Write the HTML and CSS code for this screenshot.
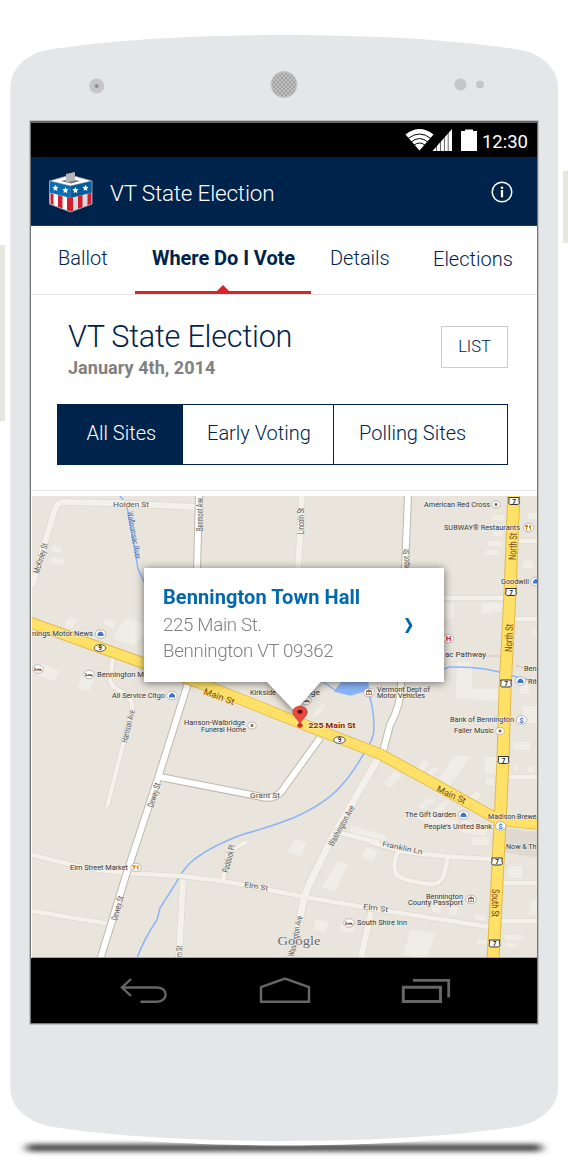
FILE: index.html
```html
<!DOCTYPE html>
<html lang="en">
<head>
<meta charset="utf-8">
<title>VT State Election</title>
<link rel="stylesheet" href="styles.css">
</head>
<body>
<div class="phone">
  <svg class="phone-shell" viewBox="0 0 568 1176" width="568" height="1176" aria-hidden="true">
    <defs>
      <filter id="soft" x="-5%" y="-150%" width="110%" height="400%"><feGaussianBlur stdDeviation="5 2.4"/></filter>
      <pattern id="mesh" width="4" height="4.4" patternUnits="userSpaceOnUse" x="282" y="82.3">
        <circle cx="2" cy="2.2" r="1.2" fill="#999"/><circle cx="0" cy="0" r="1.2" fill="#999"/><circle cx="4" cy="0" r="1.2" fill="#999"/><circle cx="0" cy="4.4" r="1.2" fill="#999"/><circle cx="4" cy="4.4" r="1.2" fill="#999"/>
      </pattern>
    </defs>
    <rect x="26" y="1144" width="516" height="7.500" rx="3.700" fill="#4a4a4a" filter="url(#soft)"/>
    <path d="M10 1080V1093C10 1113 28 1127 51 1131C115 1141 205 1145.500 284 1145.500S453 1141 517 1131C540 1127 558 1113 558 1093V1080Z" fill="#fff"/>
    <path class="shell-side" d="M0 245h5v176H0zM563 171h5v72h-5z"/>
    <path class="shell-body" d="M10.300 88C10.300 69 26 54 47 50C115 39 205 35 284 35S453 39 521 50C542 54 558 69 558 88V1088C558 1108 540 1122 517 1126.500C453 1137 363 1141 284 1141S115 1137 51 1126.500C28 1122 10.300 1108 10.300 1088Z"/>
    <circle cx="96.700" cy="86" r="7.600" fill="#c6c6c6"/><circle cx="96.700" cy="86" r="2" fill="#8f8f8f"/>
    <circle cx="284" cy="84.500" r="13.500" fill="#c6c6c6"/><circle cx="284" cy="84.500" r="12.300" fill="url(#mesh)"/>
    <circle cx="460.500" cy="84.500" r="6.100" fill="#c6c6c6"/><circle cx="480" cy="84.500" r="4" fill="#c6c6c6"/>
  </svg>

  <main class="screen">
    <div class="status">
      <svg class="status-icons" viewBox="405 128 74 24" width="74" height="24" aria-hidden="true">
        <path d="M405.500 134.500Q419.500 123.500 433.500 134.500L419.500 150.500Z" fill="#fff"/>
        <g fill="none" stroke="#000" stroke-width="1"><path d="M408 138.500Q419.500 129.500 431 138.500M410.500 142.500Q419.500 134.500 428.500 142.500M413.500 145.500Q419.500 140.500 425.500 145.500"/></g>
        <path d="M452 129V151H432.500Z" fill="#fff"/>
        <path d="M436.500 140v11M440.500 138v13M444.400 132v19M448.200 129v22" stroke="#000" stroke-width=".6"/>
        <path d="M461 131h4v-1.500h8v1.500h4v20h-16z" fill="#fff"/>
      </svg>
      <span class="clock">12:30</span>
    </div>

    <header class="appbar">
      <svg class="logo" viewBox="48 172 46 42" width="46" height="42" aria-hidden="true">
        <path d="M49.500 182L70.500 176L92 182L70.500 187Z" fill="#fff" stroke="#9aa3ad" stroke-width=".8"/>
        <path d="M61 182L70 180L80 182L71 184.500Z" fill="#777"/>
        <path d="M66 175L75 173V181.500L66 183.500Z" fill="#b5b7ba"/>
        <path d="M49.500 182L70.500 187V213L49.500 205Z" fill="#fff"/>
        <path d="M70.500 187L92 182V205L70.500 213Z" fill="#d8dce0"/>
        <path d="M49.500 182L70.500 187V199L49.500 193.500Z" fill="#0b6db4"/>
        <path d="M70.500 187L92 182V193.500L70.500 199Z" fill="#075c9c"/>
        <path d="M50.500 194L53.500 195V206L50.500 205ZM58 196L62.500 197V209.500L58 208ZM67 198L70.500 199V212.500L67 211.300ZM70.500 199L73 198.300V212L70.500 213ZM78 197L82.500 196V208.500L78 210ZM87.500 194.800L91.500 193.800V205L87.500 206.500Z" fill="#d21f2b"/>
        <g fill="#fff"><path id="star" d="M55.500 185.700l.9 2 2.100.4-1.600 1.500.4 2.300-1.900-1.200-1.900 1.100.5-2.200-1.600-1.600 2.200-.2z"/><use href="#star" x="10" y="2.300"/><use href="#star" x="20" y="2.300"/><use href="#star" x="30" y="0"/></g>
        <path d="M49.500 182V205L70.500 213L92 205V182" fill="none" stroke="#9aa3ad" stroke-width=".9"/>
      </svg>
      <span class="app-title">VT State Election</span>
      <svg class="info" viewBox="0 0 22 22" width="22" height="22" aria-hidden="true"><circle cx="11" cy="11" r="9.800" fill="none" stroke="#fff" stroke-width="1.500"/><circle cx="11" cy="6.700" r="1.300" fill="#fff"/><path d="M11 9v7.300" stroke="#fff" stroke-width="2.200"/></svg>
    </header>

    <nav class="tabs">
      <span class="tab tab-ballot">Ballot</span>
      <span class="tab tab-active">Where Do I Vote</span>
      <span class="tab tab-details">Details</span>
      <span class="tab tab-elections">Elections</span>
    </nav>

    <section class="intro">
      <div class="intro-head">
        <div>
          <h1 class="heading">VT State Election</h1>
          <p class="date">January 4th, 2014</p>
        </div>
        <span class="list-btn">LIST</span>
      </div>
      <div class="segments">
        <span class="seg seg-on">All Sites</span>
        <span class="seg seg-early">Early Voting</span>
        <span class="seg seg-polling">Polling Sites</span>
      </div>
    </section>

    <section class="map-wrap">
      <svg class="map" viewBox="32 496 505 462" width="505" height="462">
        <defs>
          <g id="seven"><path d="M-5.300-3.500H5.300L4.800-1Q6.500 3.500 3 3.500H-3Q-6.500 3.500-4.800-1Z" fill="#fff" stroke="#333" stroke-width="1"/><text class="shield" x="0" y="2.500">7</text></g>
          <g id="nine"><ellipse rx="5.800" ry="3.400" fill="#fff" stroke="#333" stroke-width=".8"/><text class="shield" x="0" y="2.300">9</text></g>
          <g id="halo"><ellipse rx="5.300" ry="4.300" fill="#fff" stroke="#aaa" stroke-width=".8"/></g>
          <g id="dot"><ellipse rx="4.200" ry="3.400" fill="#fff" stroke="#999" stroke-width=".6"/><rect x="-1.300" y="-1.300" width="2.600" height="2.600" fill="#8c5a3c"/></g>
          <g id="food"><use href="#halo"/><path d="M-2-2.500v5M-3-2.500v2h2v-2M2-2.500v5M1-2v2h1" fill="none" stroke="#f57c00" stroke-width="1"/></g>
          <g id="bed"><use href="#halo"/><path d="M-3-1.500v3.500M-3 1h6v1M-1 .3h4" fill="none" stroke="#8c5a3c" stroke-width="1.200"/></g>
          <g id="shop"><use href="#halo"/><path d="M-3 2V0Q-2-2.500 0-2.500T3 0V2Z" fill="#3f74d1"/></g>
          <g id="bank"><use href="#halo"/><text class="dollar" x="0" y="2.900">$</text></g>
          <g id="civic"><use href="#halo"/><path d="M-3-1L0-2.700L3-1ZM-2.500-.5v2.500M0-.5v2.500M2.500-.5v2.500M-3 2h6" fill="#8c5a3c" stroke="#8c5a3c" stroke-width=".7"/></g>
        </defs>
        <rect x="32" y="496" width="506" height="462" fill="#e9e5dd"/>
        <path d="M504 828L537 832V858L503 852Z" fill="#dfd9d1"/>
        <g class="block">
          <path d="M52 545l10 3-1 5-10-2zM51 557l13 2-1 6-13-2zM70 617l7 3-5 9-8-3zM107 618l8 4-1 3 0 4-12-6zM127 617l19 8v8l-13 13-21-8zM40 663l19 8-5 10-22-8zM83 672l12 3-6 16-11-3z"/>
          <path d="M492 515h12v5h-12zM493 531h10v5h-10zM488 541h14v5h-14zM486 550h13v5h-13zM528 513h9v6h-9zM523 561h10v7h-10zM444 603h10l-1 15h-9zM482 603h23v9h-9l-1-4-2 5h-12zM457 662h15v27h27v12l-43-3zM521 678h8v16h-9zM532 630h6v5h-6zM523 706h14v17h-14z"/>
          <path d="M454 756l16 0-21 31-9-3-1-6zM424 760l6 3-8 8-5-3zM434 767l5 2-7 6-5-2zM394 771l8 5-12 12-6-5zM485 757h12v17h-12zM486 778h8v7h-8zM520 742h10v8h-10l-7-1v-6zM527 767h7v5h-7zM515 766h3v4h-3zM477 792l5 3-6 5-6-3zM429 798l6 3-12 8-6-3zM445 800l5 2-11 13-6-3zM419 812l40 9-9 9-35-12zM462 820l27 6-4 10-24-4zM472 837h17v8h-18zM351 825l35 11v7l-37-9zM296 839l11 4-6 13-14-4zM366 847l12 4-5 10-11-3zM338 861l10 3-13 28-13-5z"/>
          <path d="M508 866h14v12h-14zM531 900h6v15h-8zM316 919l13 3-4 10-12-3zM342 922l13 3-2 8-13-2zM411 929l24 5-8 24-24-3zM477 939l11 1v4h-11zM505 935h18v5h-18zM506 943h11v4h-11zM432 898l10 4-2 12-8-3zM450 905l8 2-2 9-7-3zM475 914l11 2-1 5-10-2z"/>
          <path d="M370 831l16 4v6l-16-3zM318 707l8-5-5 11-9 6z"/>
        </g>
        <g class="water">
          <path d="M119 495Q126 502 128 512L135 550L138 569L145 584M322 681L335 690M367 690Q374 705 374 728Q374 740 363 755Q352 774 341 786Q325 804 293 818Q270 827 244 834Q208 847 190 863Q180 874 176 883L160 908L157 920Q145 937 137 958M444 669L450 667Q485 666 513 676L538 682"/>
          <path d="M335 691L343 681H368V690L350 695Z" fill="#8ab4f8"/>
        </g>
        <g class="edge">
          <path class="w6" d="M32 586L54 512Q57 502 63 502L113 503L197 507"/>
          <path class="w6" d="M302 495L298 570M183 880L179 958M371 912L361 958"/>
          <path class="w5" d="M113 657L110 678Q110 686 118 690Q134 697 132 710L107 807M32 855L73 865Q100 871 127 873L180 876L223 881L305 897L380 910L490 927M32 911L110 924M223 880L228 855Q229 850 247 842M340 833L380 843M370 842L400 851Q440 857 495 859M398 851Q392 866 396 874Q403 882 433 884Q443 883 445 870L448 856"/>
          <path class="w5" d="M518 541H538M515 619H538M444 598H506M508 777H538M503 883H538M502 921H538"/>
          <path class="w7" d="M380 755L331 840L308 887Q302 903 300 920L291 958"/>
        </g>
        <g class="minor">
          <path class="w6" d="M32 586L54 512Q57 502 63 502L113 503L197 507"/>
          <path class="w6" d="M302 495L298 570M183 880L179 958M371 912L361 958"/>
          <path class="w5" d="M113 657L110 678Q110 686 118 690Q134 697 132 710L107 807M32 855L73 865Q100 871 127 873L180 876L223 881L305 897L380 910L490 927M32 911L110 924M223 880L228 855Q229 850 247 842M340 833L380 843M370 842L400 851Q440 857 495 859M398 851Q392 866 396 874Q403 882 433 884Q443 883 445 870L448 856"/>
          <path class="w5" d="M518 541H538M515 619H538M444 598H506M508 777H538M503 883H538M502 921H538"/>
          <path class="w7" d="M380 755L331 840L308 887Q302 903 300 920L291 958"/>
        </g>
        <path d="M486 656H500M516 665L524 668" stroke="#d0c9bb" stroke-width="1.200"/>
        <g class="major-edge"><path d="M199 495L197 570M408 495L405 570L401 682Q402 703 390 725L382 755M188 683L158 778L127 872L100 960M160 777L257 796Q273 801 281 792L320 738"/></g>
        <g class="major"><path d="M199 495L197 570M408 495L405 570L401 682Q402 703 390 725L382 755M188 683L158 778L127 872L100 960M160 777L257 796Q273 801 281 792L320 738"/></g>
        <g class="hwy-edge"><path class="main" d="M26 621L143 663L200 683L305 725L380 754L440 787L490 815Q500 822 540 824"/><path class="north" d="M514 490L510 593L505 690L503 760L500 823L493 962"/></g>
        <g class="hwy"><path class="main" d="M26 621L143 663L200 683L305 725L380 754L440 787L490 815Q500 822 540 824"/><path class="north" d="M514 490L510 593L505 690L503 760L500 823L493 962"/></g>

        <g class="street">
          <text x="113" y="507" textLength="36" lengthAdjust="spacingAndGlyphs">Holden St</text>
          <text class="tall" transform="translate(39 574) rotate(-73)" textLength="31" lengthAdjust="spacingAndGlyphs">McKinley St</text>
          <text class="tall" transform="translate(203 531) rotate(-90)" textLength="33" lengthAdjust="spacingAndGlyphs">Benmont Ave</text>
          <text class="tall" transform="translate(304 534) rotate(-90)" textLength="26" lengthAdjust="spacingAndGlyphs">Lincoln St</text>
          <text class="tall" transform="translate(409 568) rotate(-89)" textLength="19" lengthAdjust="spacingAndGlyphs">epot St</text>
          <text class="tall" transform="translate(127 743) rotate(-76)" textLength="33" lengthAdjust="spacingAndGlyphs">Harrison Ave</text>
          <text class="tall" transform="translate(153 808) rotate(-72)" textLength="25" lengthAdjust="spacingAndGlyphs">Dewey St</text>
          <text class="tall" transform="translate(117 921) rotate(-74)" textLength="25" lengthAdjust="spacingAndGlyphs">Dewey St</text>
          <text transform="translate(250 798) rotate(0)" textLength="30" lengthAdjust="spacingAndGlyphs">Grant St</text>
          <text class="tall" transform="translate(333 847) rotate(-61)" textLength="45" lengthAdjust="spacingAndGlyphs">Washington Ave</text>
          <text class="tall" transform="translate(294 957) rotate(-78)" textLength="41" lengthAdjust="spacingAndGlyphs">Washington Ave</text>
          <text class="tall" transform="translate(228 873) rotate(-75)" textLength="28" lengthAdjust="spacingAndGlyphs">Paddock Pl</text>
          <text transform="translate(244 887) rotate(9)" textLength="24" lengthAdjust="spacingAndGlyphs">Elm St</text>
          <text transform="translate(363 909) rotate(7)" textLength="25" lengthAdjust="spacingAndGlyphs">Elm St</text>
          <text transform="translate(382 846) rotate(12)" textLength="41" lengthAdjust="spacingAndGlyphs">Franklin Ln</text>
          <text class="tall" transform="translate(182 957) rotate(-88)" textLength="11" lengthAdjust="spacingAndGlyphs">m St</text>
        </g>
        <text class="river" transform="translate(127 512) rotate(80)" textLength="48" lengthAdjust="spacingAndGlyphs">Walloomsac River</text>
        <g class="hwy-name">
          <text transform="translate(203 694) rotate(20)" textLength="32" lengthAdjust="spacingAndGlyphs">Main St</text>
          <text transform="translate(436 791) rotate(25)" textLength="31" lengthAdjust="spacingAndGlyphs">Main St</text>
          <text class="upright" transform="translate(516 560) rotate(-88)" textLength="27" lengthAdjust="spacingAndGlyphs">North St</text>
          <text class="upright" transform="translate(512 652) rotate(-88)" textLength="28" lengthAdjust="spacingAndGlyphs">North St</text>
          <text class="upright" transform="translate(492 889) rotate(91)" textLength="28" lengthAdjust="spacingAndGlyphs">South St</text>
        </g>
        <g class="poi">
          <text x="32" y="636" textLength="61" lengthAdjust="spacingAndGlyphs">nings Motor News</text>
          <text x="97" y="677" textLength="47" lengthAdjust="spacingAndGlyphs">Bennington M</text>
          <text x="112" y="698" textLength="53" lengthAdjust="spacingAndGlyphs">All Service Citgo</text>
          <text x="184" y="725" textLength="61" lengthAdjust="spacingAndGlyphs">Hanson-Walbridge</text>
          <text x="201" y="731.500" textLength="45" lengthAdjust="spacingAndGlyphs">Funeral Home</text>
          <text x="250" y="695" textLength="26" lengthAdjust="spacingAndGlyphs">Kirkside</text>
          <text x="306" y="695" textLength="14" lengthAdjust="spacingAndGlyphs">dge</text>
          <text x="424" y="507" textLength="66" lengthAdjust="spacingAndGlyphs">American Red Cross</text>
          <text x="444" y="530" textLength="76" lengthAdjust="spacingAndGlyphs">SUBWAY® Restaurants</text>
          <text x="501" y="584" textLength="28" lengthAdjust="spacingAndGlyphs">Goodwill</text>
          <text x="445" y="657" textLength="41" lengthAdjust="spacingAndGlyphs">ac Pathway</text>
          <text x="524" y="671" textLength="12.500" lengthAdjust="spacingAndGlyphs">Ben</text>
          <text x="528" y="684" textLength="8.500" lengthAdjust="spacingAndGlyphs">Rit</text>
          <text x="377" y="692" textLength="53" lengthAdjust="spacingAndGlyphs">Vermont Dept of</text>
          <text x="377" y="698" textLength="48" lengthAdjust="spacingAndGlyphs">Motor Vehicles</text>
          <text x="450" y="722" textLength="64" lengthAdjust="spacingAndGlyphs">Bank of Bennington</text>
          <text x="454" y="733" textLength="40" lengthAdjust="spacingAndGlyphs">Faller Music</text>
          <text x="405" y="817" textLength="51" lengthAdjust="spacingAndGlyphs">The Gift Garden</text>
          <text x="424" y="829" textLength="68" lengthAdjust="spacingAndGlyphs">People's United Bank</text>
          <text x="488" y="819" textLength="48.500" lengthAdjust="spacingAndGlyphs">Madison Brewe</text>
          <text x="506" y="849" textLength="30.500" lengthAdjust="spacingAndGlyphs">Now &amp; Th</text>
          <text x="426" y="899" textLength="37" lengthAdjust="spacingAndGlyphs">Bennington</text>
          <text x="408" y="905" textLength="55" lengthAdjust="spacingAndGlyphs">County Passport</text>
          <text x="357" y="925" textLength="50" lengthAdjust="spacingAndGlyphs">South Shire Inn</text>
          <text x="70" y="870" textLength="58" lengthAdjust="spacingAndGlyphs">Elm Street Market</text>
        </g>
        <use href="#seven" x="514" y="501"/><use href="#seven" x="511" y="592"/><use href="#seven" x="506" y="683.500"/><use href="#seven" x="503.500" y="760"/><use href="#seven" x="497" y="861.500"/><use href="#seven" x="494.500" y="943.500"/>
        <use href="#nine" x="100" y="648"/><use href="#nine" x="339.500" y="740"/>
        <use href="#dot" x="496" y="504.500"/><use href="#dot" x="252" y="725.500"/><use href="#dot" x="500" y="731"/>
        <use href="#food" x="528.500" y="527.500"/><use href="#food" x="136" y="867.500"/>
        <use href="#bed" x="38" y="669"/><use href="#bed" x="89" y="674.500"/><use href="#bed" x="349" y="923"/><use href="#bed" x="306" y="700.500"/>
        <use href="#shop" x="100.500" y="634"/><use href="#shop" x="172" y="695.500"/><use href="#shop" x="463.500" y="815"/><use href="#shop" x="520.500" y="681"/><use href="#shop" x="536" y="581.500"/>
        <use href="#bank" x="521.500" y="720"/><use href="#bank" x="500.500" y="826"/>
        <use href="#civic" x="369" y="692.500"/><use href="#civic" x="471" y="899.500"/>
        <use href="#halo" x="448.500" y="638.500"/><text class="hospital" x="448.500" y="641.300">H</text>
        <text class="google" x="277.500" y="945" textLength="43" lengthAdjust="spacingAndGlyphs">Google</text>
        <path d="M32 957.500H538" stroke="#aaa69f"/>
      </svg>

      <div class="callout">
        <div class="callout-text">
          <strong class="place">Bennington Town Hall</strong>
          <span class="addr">225 Main St.</span>
          <span class="addr">Bennington VT 09362</span>
        </div>
        <svg class="chevron" viewBox="0 0 8 15" width="8" height="15" aria-hidden="true"><path d="M0 0H3.200L7.500 7.500L3.200 15H0L4.200 7.500Z" fill="#0069b0"/></svg>
        <svg class="pointer" viewBox="266 681 56 30" width="56" height="30" aria-hidden="true"><path d="M266 681L293.500 710H296L321.500 681Z" fill="#fff"/></svg>
      </div>

      <svg class="pin" viewBox="290 704 68 28" width="68" height="28">
        <ellipse cx="300" cy="725.500" rx="2.700" ry="2.200" fill="#c9302c"/>
        <path d="M300 725C299 719 292.800 717 292.800 711.800A7.200 5.600 0 0 1 307.200 711.800C307.200 717 301 719 300 725Z" fill="#ea4a3f" stroke="#b33" stroke-width=".7"/>
        <ellipse cx="300" cy="711.700" rx="2.700" ry="2" fill="#5b1310"/>
        <text class="pin-label" x="308.500" y="728" textLength="47" lengthAdjust="spacingAndGlyphs">225 Main St</text>
      </svg>
    </section>

    <footer class="softkeys">
      <svg class="key" viewBox="120 976 48 28" width="48" height="28" aria-hidden="true"><path d="M131 979L122 987.500L131 996M122 987.500H157C168.500 987.500 168.500 1001.700 157 1001.700H140.500" fill="none" stroke="#666" stroke-width="2.400"/></svg>
      <svg class="key" viewBox="258 976 52 28" width="52" height="28" aria-hidden="true"><path d="M260 1001.700V987L284 978.500L308 987V1001.700Z" fill="none" stroke="#666" stroke-width="2.400"/></svg>
      <svg class="key" viewBox="401 976 50 28" width="50" height="28" aria-hidden="true"><path d="M403.300 987.300H440.500V1001.500H403.300Z" fill="none" stroke="#666" stroke-width="3"/><path d="M413 980.300H448.700V997.500" fill="none" stroke="#666" stroke-width="2.800"/></svg>
    </footer>
  </main>
</div>
</body>
</html>
```
FILE: styles.css
```css
* { box-sizing: border-box; }
body {
  margin: 0;
  width: 568px;
  height: 1176px;
  background: #fff;
  font-family: Roboto, "Open Sans", sans-serif;
  overflow: hidden;
}
.phone {
  position: relative;
  height: 1176px;
  padding: 121px 30px 0;
}
.phone-shell { position: absolute; left: 0; top: 0; }
.shell-side { fill: #e6e7e1; }
.shell-body { fill: #e5e6e8; }

.screen {
  position: relative;
  display: flex;
  flex-direction: column;
  width: 508px;
  height: 903px;
  background: #fff;
  border: 1px solid #777;
  border-top: 2px solid #666;
  box-shadow: 0 0 0 .6px #aaa;
}
.status {
  display: flex;
  align-items: center;
  justify-content: flex-end;
  height: 34px;
  padding-right: 9px;
  background: #000;
  color: #fff;
}
.status-icons { margin-right: 3px; }
.clock { font-size: 18.5px; line-height: 20px; margin-top: 3px; }

.appbar {
  display: flex;
  align-items: center;
  height: 69px;
  padding: 0 24px 0 17px;
  background: #00234b;
  border-bottom: 1px solid #1c3c63;
  color: #fff;
}
.logo { margin-top: 2px; }
.app-title {
  margin: 3px 0 0 16px;
  font-size: 22.5px;
  font-weight: 300;
  letter-spacing: -.2px;
}
.info { margin: 1px 0 0 auto; }

.tabs {
  display: flex;
  height: 69px;
  padding-left: 27px;
  border-bottom: 1px solid #e5e5e5;
  color: #00234b;
  font-size: 20px;
  font-weight: 300;
  line-height: 64px;
  white-space: nowrap;
}
.tab { flex: none; }
.tab-ballot { width: 77px; }
.tab-active {
  position: relative;
  width: 176px;
  height: 68px;
  padding-left: 17px;
  border-bottom: 3px solid #d8232b;
  font-weight: 700;
  letter-spacing: -.06px;
}
.tab-active::after {
  content: "";
  position: absolute;
  left: 82px;
  bottom: 0;
  border: solid transparent;
  border-width: 0 6px 6px;
  border-bottom-color: #d8232b;
}
.tab-details { width: 103px; padding-left: 19px; }
.tab-elections { padding-left: 19px; line-height: 66px; }

.intro {
  height: 196px;
  padding: 24px 29px 0 26px;
  border-bottom: 1px solid #e5e5e5;
}
.intro-head {
  display: flex;
  justify-content: space-between;
  align-items: flex-start;
  height: 85px;
  padding-left: 11px;
}
.heading {
  margin: 0;
  color: #00234b;
  font-size: 30.6px;
  font-weight: 300;
  letter-spacing: -.23px;
  line-height: 35px;
}
.date {
  margin: 3px 0 0;
  color: #808080;
  font-size: 18px;
  font-weight: 700;
  letter-spacing: .05px;
  line-height: 22px;
}
.list-btn {
  width: 67px;
  height: 42px;
  margin-top: 7px;
  border: 1px solid #ccc;
  color: #00234b;
  font-size: 16.5px;
  font-weight: 300;
  line-height: 39px;
  text-align: center;
}
.segments {
  display: flex;
  width: 451px;
  height: 61px;
  border: 1px solid #00234b;
  color: #00234b;
  font-size: 20px;
  font-weight: 300;
  line-height: 57px;
  white-space: nowrap;
}
.seg-on { width: 124px; padding-left: 28.5px; background: #00234b; color: #fff; }
.seg-early { width: 152px; padding-left: 24px; border-left: 1px solid #00234b; border-right: 1px solid #00234b; }
.seg-polling { padding-left: 25px; }

.map-wrap {
  position: relative;
  height: 467px;
  padding: 5px 0 0 1px;
  overflow: hidden;
}
.map { display: block; }
.block { fill: #f0ede6; }
.w5 { stroke-width: 5px; }
.w6 { stroke-width: 6px; }
.w7 { stroke-width: 7px; }
.water { fill: none; stroke: #8ab4f8; stroke-width: 1.5px; }
.edge, .minor, .major, .major-edge, .hwy, .hwy-edge { fill: none; stroke-linejoin: round; }
.edge { stroke: #d8d3c8; }
.edge .w5 { stroke-width: 5.6px; }
.edge .w6 { stroke-width: 7px; }
.edge .w7 { stroke-width: 8px; }
.minor { stroke: #f4f1ea; }
.minor .w5 { stroke-width: 4.4px; }
.major-edge { stroke: #bdb8ac; stroke-width: 8px; }
.major { stroke: #fff; stroke-width: 6px; }
.hwy-edge { stroke: #e0b94c; }
.hwy-edge .main { stroke-width: 11.5px; }
.hwy-edge .north { stroke-width: 13px; }
.hwy { stroke: #ffe168; }
.hwy .main { stroke-width: 9.8px; }
.hwy .north { stroke-width: 11px; }
.street, .river, .hwy-name, .poi { paint-order: stroke; stroke-linejoin: round; }
.street { fill: #555; font-size: 7.2px; stroke: #f4f1ea; stroke-width: 1px; }
.street .tall { font-size: 8.8px; }
.river { fill: #4272b8; font-size: 8.5px; }
.hwy-name { fill: #7a4a12; font-size: 9px; stroke: #ffe168; stroke-width: 1px; }
.hwy-name .upright { font-size: 10.5px; }
.poi { fill: #333; font-size: 6.4px; stroke: #f1eee8; stroke-width: 1px; }
.shield { font-size: 6.5px; font-weight: 700; text-anchor: middle; fill: #222; }
.dollar, .hospital { font-size: 8px; font-weight: 700; text-anchor: middle; fill: #3f74d1; }
.hospital { fill: #d32f2f; }
.google { font-family: "Liberation Serif", serif; font-size: 12.5px; fill: #6b6b6b; stroke: #eee; stroke-width: 1px; paint-order: stroke; }

.callout {
  position: absolute;
  left: 113px;
  top: 77px;
  display: flex;
  align-items: center;
  justify-content: space-between;
  width: 300px;
  height: 114px;
  padding: 0 31px 0 19px;
  background: #fff;
  filter: drop-shadow(0 1px 4px rgba(0, 0, 0, .55));
}
.callout-text { display: flex; flex-direction: column; margin-top: -2px; line-height: 26px; white-space: nowrap; }
.place { margin-bottom: 1px; color: #0069b0; font-size: 20px; font-weight: 700; letter-spacing: .08px; line-height: 27px; }
.addr { color: #808080; font-size: 18.7px; font-weight: 300; letter-spacing: -.32px; }
.pointer { position: absolute; left: 122px; top: 113px; }
.pin { position: absolute; left: 259px; top: 213px; }
.pin-label { fill: #8a1c1c; stroke: #fbeeb0; stroke-width: 1px; paint-order: stroke; font-size: 7px; font-weight: 700; }

.softkeys {
  display: flex;
  flex: 1;
  align-items: flex-start;
  justify-content: space-between;
  padding: 18px 86px 0 89px;
  background: #000;
}
```
